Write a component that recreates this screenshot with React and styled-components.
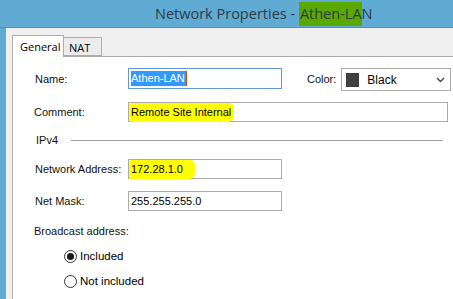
import React from 'react';
import styled, { createGlobalStyle } from 'styled-components';

const GlobalStyle = createGlobalStyle`
  html, body {
    margin: 0;
    padding: 0;
    background: #5fabd3;
  }
`;

const Page = styled.div`
  width: 453px;
  height: 299px;
  overflow: hidden;
  background: #5fabd3;
  display: flex;
  flex-direction: column;
  font-family: "Liberation Sans", Arial, sans-serif;
`;

const TitleBar = styled.div`
  height: 28px;
  flex: none;
  display: flex;
  align-items: center;
  padding-left: 155px;
  font-family: "Open Sans", "Noto Sans", sans-serif;
  font-size: 14.5px;
  color: #2e3b44;
  border-bottom: 1px solid #4b93bd;
  box-sizing: border-box;
  white-space: pre;
`;

const Marker = styled.span`
  background: ${(p) => p.color};
  padding: ${(p) => p.pad || '0'};
`;

const Body = styled.div`
  flex: 1;
  margin-left: 6px;
  background: #f0f0f0;
  padding: 7px 0 0 6px;
  display: flex;
  flex-direction: column;
`;

const TabStrip = styled.div`
  display: flex;
  align-items: flex-end;
  height: 21px;
  border-bottom: 1px solid #adadad;
  position: relative;
  z-index: 1;
`;

const Tab = styled.div`
  box-sizing: border-box;
  height: ${(p) => (p.active ? '22px' : '19px')};
  margin-bottom: ${(p) => (p.active ? '-1px' : '0')};
  padding: ${(p) => (p.active ? '4px 6px 0 7px' : '3px 6px 0 5px')};
  width: ${(p) => p.w}px;
  background: ${(p) => (p.active ? '#ffffff' : '#ececec')};
  border: 1px solid #adadad;
  border-bottom: ${(p) => (p.active ? 'none' : '1px solid #adadad')};
  border-left: ${(p) => (p.active ? '1px solid #adadad' : 'none')};
  font-family: "Open Sans", "Noto Sans", sans-serif;
  font-size: 11px;
  color: #000;
  line-height: 14px;
`;

const Panel = styled.div`
  flex: 1;
  background: #ffffff;
  border-left: 1px solid #adadad;
  padding: 11px 0 0 22px;
  display: flex;
  flex-direction: column;
`;

const Row = styled.div`
  display: flex;
  align-items: center;
  height: ${(p) => p.h}px;
  margin-top: ${(p) => p.mt || 0}px;
`;

const Label = styled.div`
  width: ${(p) => p.w || 93}px;
  flex: none;
  font-size: 11px;
  color: #111;
  white-space: nowrap;
  margin-left: ${(p) => p.ml || 0}px;
`;

const Field = styled.div`
  box-sizing: border-box;
  width: ${(p) => p.w}px;
  height: ${(p) => p.h || 20}px;
  border: 1px solid ${(p) => (p.focused ? '#5e9ad6' : '#acacac')};
  display: flex;
  align-items: center;
  padding-left: 2px;
  font-size: 11px;
  color: #000;
`;

const Selected = styled.span`
  background: #3399ff;
  color: #fff;
  padding: 1px 1px 2px 0;
  border-right: 1px solid #c05000;
`;

const Highlight = styled.span`
  background: #ffff00;
  padding: 3px 3px 4px 2px;
  margin-left: -2px;
  border-radius: 3px 5px 6px 2px;
`;

const ColorLabel = styled.div`
  margin-left: 25px;
  margin-right: 5px;
  font-size: 11px;
  color: #111;
`;

const Select = styled.div`
  box-sizing: border-box;
  width: 110px;
  height: 23px;
  border: 1px solid #acacac;
  display: flex;
  align-items: center;
  padding: 0 5px 0 4px;
  gap: 8px;
  font-size: 12px;
  color: #000;
  margin-top: 2px;
`;

const Swatch = styled.div`
  width: 13px;
  height: 14px;
  background: #404040;
  flex: none;
`;

const Grow = styled.div`
  flex: 1;
`;

const Section = styled.div`
  display: flex;
  align-items: center;
  height: 20px;
  margin-top: 8px;
  font-size: 11px;
  color: #111;
  gap: 13px;
  padding-left: 1px;
`;

const Rule = styled.div`
  width: 372px;
  height: 1px;
  background: #a0a0a0;
`;

const RadioRow = styled.div`
  display: flex;
  align-items: center;
  gap: 3px;
  height: 20px;
  margin-top: ${(p) => p.mt}px;
  padding-left: 29px;
  font-size: 11.5px;
  color: #000;
`;

const RadioCircle = styled.div`
  box-sizing: border-box;
  width: 13px;
  height: 13px;
  border-radius: 50%;
  border: 1px solid #333;
  background: #fff;
  display: flex;
  align-items: center;
  justify-content: center;
  &::after {
    content: '';
    display: ${(p) => (p.checked ? 'block' : 'none')};
    width: 7px;
    height: 7px;
    border-radius: 50%;
    background: #1a1a1a;
  }
`;

const Chevron = () => (
  <svg width="9" height="6" viewBox="0 0 9 6">
    <path d="M1 1 L4.5 4.5 L8 1" fill="none" stroke="#444" strokeWidth="1.4" />
  </svg>
);

export default function App() {
  return (
    <Page>
      <GlobalStyle />
      <TitleBar>
        {'Network Properties - '}
        <Marker color="#5aa800" pad="2px 0 3px 1px">Athen-LA</Marker>N
      </TitleBar>
      <Body>
        <TabStrip>
          <Tab active w={52}>General</Tab>
          <Tab w={38}>NAT</Tab>
        </TabStrip>
        <Panel>
          <Row h={21}>
            <Label>Name:</Label>
            <Field w={154} h={21} focused>
              <Selected>Athen-LAN</Selected>
            </Field>
            <ColorLabel>Color:</ColorLabel>
            <Select>
              <Swatch />
              <span>Black</span>
              <Grow />
              <Chevron />
            </Select>
          </Row>
          <Row h={20} mt={13}>
            <Label ml={-1} w={94}>Comment:</Label>
            <Field w={320}>
              <Highlight>Remote Site Internal</Highlight>
            </Field>
          </Row>
          <Section>
            IPv4
            <Rule />
          </Section>
          <Row h={20} mt={9}>
            <Label>Network Address:</Label>
            <Field w={154}>
              <Highlight>172.28.1.0&nbsp;&nbsp;&nbsp;</Highlight>
            </Field>
          </Row>
          <Row h={20} mt={12}>
            <Label>Net Mask:</Label>
            <Field w={154}>255.255.255.0</Field>
          </Row>
          <Row h={20} mt={10}>
            <Label ml={-1}>Broadcast address:</Label>
          </Row>
          <RadioRow mt={5}>
            <RadioCircle checked />
            Included
          </RadioRow>
          <RadioRow mt={5}>
            <RadioCircle />
            Not included
          </RadioRow>
        </Panel>
      </Body>
    </Page>
  );
}
